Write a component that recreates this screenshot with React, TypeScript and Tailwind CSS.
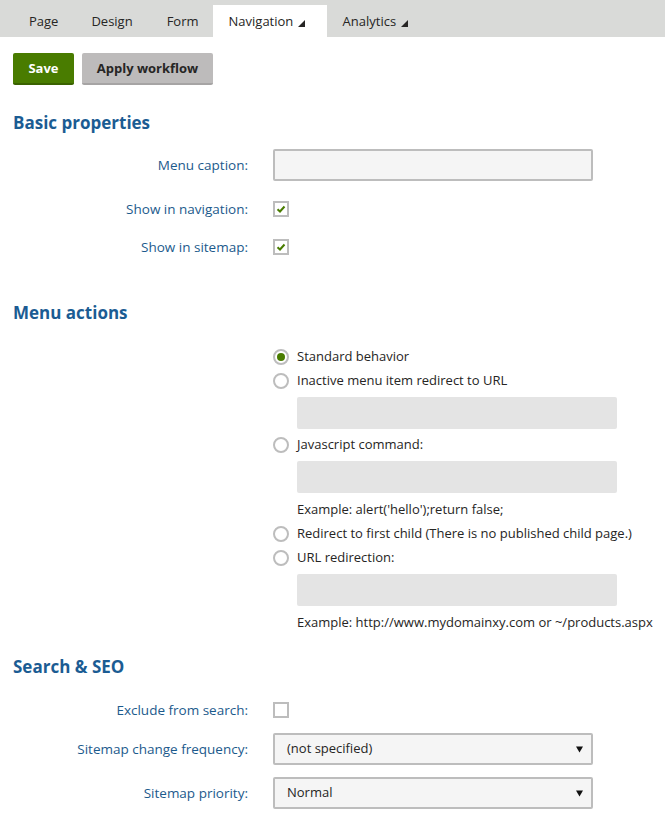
import React from "react";

const font = { fontFamily: '"Open Sans", "Noto Sans", sans-serif' };

function Tri() {
  return (
    <svg width="7" height="7" viewBox="0 0 7 7" className="inline-block ml-[5px] relative top-[1px]">
      <polygon points="7,0 7,7 0,7" fill="#262524" />
    </svg>
  );
}

function Check({ checked }: { checked?: boolean }) {
  return (
    <div className="w-4 h-4 border-2 border-[#bdbdbd] bg-white flex items-center justify-center">
      {checked && (
        <svg width="10" height="10" viewBox="0 0 10 10">
          <path d="M1.5 5.2 L4 7.5 L8.5 2.5" stroke="#497c00" strokeWidth="2" fill="none" />
        </svg>
      )}
    </div>
  );
}

function Radio({ checked }: { checked?: boolean }) {
  return (
    <div className="w-4 h-4 rounded-full border-2 border-[#bdbdbd] bg-white flex items-center justify-center shrink-0">
      {checked && <div className="w-2 h-2 rounded-full bg-[#497c00]" />}
    </div>
  );
}

function Label({ children }: { children: React.ReactNode }) {
  return <div className="w-[248px] shrink-0 text-right text-[13.5px] text-[#1c5a8c]">{children}</div>;
}

function Heading({ children, className }: { children: React.ReactNode; className?: string }) {
  return (
    <h2 className={"pl-[13px] h-6 leading-6 text-[17px] font-bold text-[#1b5c93] " + (className || "")}>{children}</h2>
  );
}

function Select({ value }: { value: string }) {
  return (
    <div className="w-[320px] h-8 border-2 border-[#bdbdbd] rounded-[2px] bg-[#f5f5f5] flex items-center justify-between pl-[12px] pr-[8px] text-[13px] text-[#262524]">
      <span>{value}</span>
      <svg width="7" height="7" viewBox="0 0 7 7">
        <polygon points="0,0.5 7,0.5 3.5,6.5" fill="#111" />
      </svg>
    </div>
  );
}

function Disabled() {
  return <div className="ml-6 w-[320px] h-8 bg-[#e4e4e4] rounded-[2px]" />;
}

function RadioRow({ checked, children }: { checked?: boolean; children: React.ReactNode }) {
  return (
    <div className="h-6 flex items-center gap-2 text-[13px] text-[#262524]">
      <Radio checked={checked} />
      <span>{children}</span>
    </div>
  );
}

export default function App() {
  return (
    <div className="w-[665px] h-[827px] bg-white overflow-hidden" style={font}>
      <div className="h-[37px] bg-[#d9dad8] flex items-end text-[13px] text-[#262524]">
        <div className="h-8 flex items-center pt-[2px] pl-[29px] pr-[29px]">Page</div>
        <div className="h-8 flex items-center pt-[2px] pl-[4px] pr-[28px]">Design</div>
        <div className="h-8 flex items-center pt-[2px] pl-[6px] pr-[14px]">Form</div>
        <div className="h-8 w-[114px] bg-white flex items-center pt-[2px] pl-4">
          Navigation<Tri />
        </div>
        <div className="h-8 flex items-center pt-[2px] pl-4">
          Analytics<Tri />
        </div>
      </div>

      <div className="flex gap-2 pl-[13px] mt-4">
        <button className="h-8 w-[61px] pt-[2px] bg-[#497c00] border-b-2 border-[#3a6200] rounded-[2px] text-white font-bold text-[13px]">
          Save
        </button>
        <button className="h-8 w-[131px] pt-[2px] bg-[#bdbbbb] border-b-2 border-[#a6a4a4] rounded-[2px] text-[#262524] font-bold text-[13px]">
          Apply workflow
        </button>
      </div>

      <Heading className="mt-[26px]">Basic properties</Heading>

      <div className="mt-[14px] flex items-center gap-[25px] h-8">
        <Label>Menu caption:</Label>
        <div className="w-[320px] h-8 border-2 border-[#bdbdbd] rounded-[2px] bg-[#f5f5f5]" />
      </div>
      <div className="mt-[12px] flex items-center gap-[25px] h-8">
        <Label>Show in navigation:</Label>
        <Check checked />
      </div>
      <div className="mt-[6px] flex items-center gap-[25px] h-8">
        <Label>Show in sitemap:</Label>
        <Check checked />
      </div>

      <Heading className="mt-[38px]">Menu actions</Heading>

      <div className="ml-[273px] mt-5 flex flex-col">
        <RadioRow checked>Standard behavior</RadioRow>
        <RadioRow>Inactive menu item redirect to URL</RadioRow>
        <div className="mt-1"><Disabled /></div>
        <div className="mt-1"><RadioRow>Javascript command:</RadioRow></div>
        <div className="mt-1"><Disabled /></div>
        <div className="mt-1 ml-6 h-6 leading-6 text-[13px] text-[#262524]">Example: alert('hello');return false;</div>
        <div className="mt-[1px]"><RadioRow>Redirect to first child (There is no published child page.)</RadioRow></div>
        <RadioRow>URL redirection:</RadioRow>
        <div className="mt-1"><Disabled /></div>
        <div className="mt-1 ml-6 h-6 leading-6 text-[13px] text-[#262524] whitespace-nowrap">Example: http://www.mydomainxy.com or ~/products.aspx</div>
      </div>

      <Heading className="mt-[21px]">Search &amp; SEO</Heading>

      <div className="mt-[23px] flex items-center gap-[25px] h-4">
        <Label>Exclude from search:</Label>
        <Check />
      </div>
      <div className="mt-[15px] flex items-center gap-[25px] h-8">
        <Label>Sitemap change frequency:</Label>
        <Select value="(not specified)" />
      </div>
      <div className="mt-[12px] flex items-center gap-[25px] h-8">
        <Label>Sitemap priority:</Label>
        <Select value="Normal" />
      </div>
    </div>
  );
}
